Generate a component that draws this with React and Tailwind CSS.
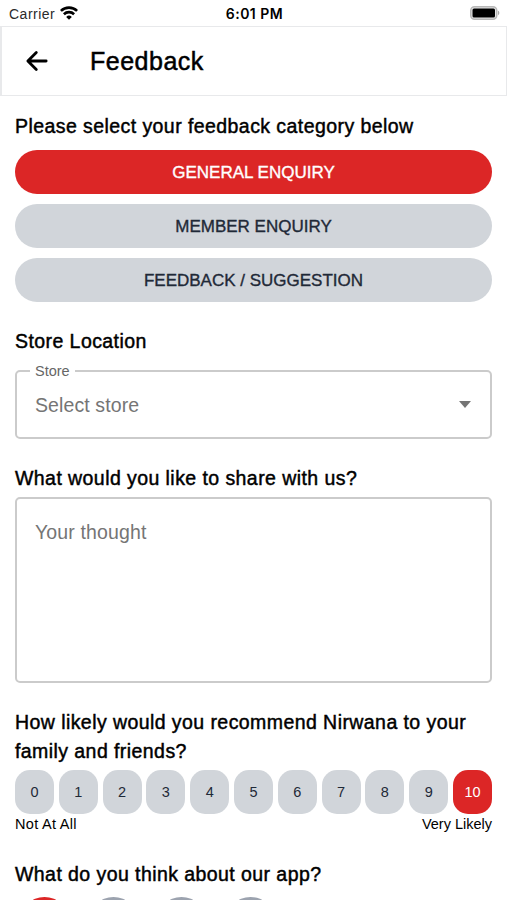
import React, { useState } from 'react';

const categories = ['GENERAL ENQUIRY', 'MEMBER ENQUIRY', 'FEEDBACK / SUGGESTION'];
const scores = [0, 1, 2, 3, 4, 5, 6, 7, 8, 9, 10];
const ratings = [1, 2, 3, 4];

const StatusBar = () => (
    <div className="h-[26px] pl-[9px] pr-[7px] grid grid-cols-3 items-center">
        <div className="flex items-center gap-[5px]">
            <span className="text-[14px] leading-[26px] tracking-[0.5px] text-[#2a2a2a]">Carrier</span>
            <svg className="-mt-px" width="18" height="14" viewBox="0 0 18 14" fill="none" stroke="#000" strokeWidth="2.6">
                <path d="M0.9 4.9a11.6 11.6 0 0 1 16.2 0" />
                <path d="M3.9 8.2a7.3 7.3 0 0 1 10.2 0" />
                <path d="M9 13.8 6.2 10.9a4 4 0 0 1 5.6 0z" fill="#000" stroke="none" />
            </svg>
        </div>
        <span className="text-center text-[14px] leading-[26px] tracking-[0.5px] font-semibold pt-px font-[Inter,sans-serif]">6:01 PM</span>
        <svg className="justify-self-end -mt-px" width="30" height="14" viewBox="0 0 30 14">
            <rect x="0.75" y="0.75" width="26" height="12.5" rx="3.8" fill="#e6e6e6" stroke="#b8b8b8" strokeWidth="1.5" />
            <rect x="2.5" y="2.5" width="22.5" height="9" rx="1.5" fill="#000" />
            <path d="M28 4.8v4.4c1.8-.6 1.8-3.8 0-4.4z" fill="#aaa" />
        </svg>
    </div>
);

const Question = ({ children }) => (
    <h2 className="text-[19.5px] leading-[29px] tracking-[0.43px] text-black [-webkit-text-stroke:0.45px_#000]">{children}</h2>
);

const App = () => {
    const [category, setCategory] = useState('GENERAL ENQUIRY');
    const [score, setScore] = useState(10);
    const [rating, setRating] = useState(1);

    return (
        <div className="h-[900px] overflow-hidden bg-white text-black font-['Liberation_Sans',Arial,sans-serif]">
            <StatusBar />

            <header className="h-[70px] flex items-center border border-l-2 border-[#e8e9eb] pl-[20px]">
                <button type="button" aria-label="Back">
                    <svg width="30" height="30" viewBox="0 0 512 512" fill="none" stroke="#000" strokeWidth="48" strokeLinecap="round" strokeLinejoin="round">
                        <path d="M244 400 100 256l144-144M120 256h292" />
                    </svg>
                </button>
                <h1 className="ml-[38px] pb-px text-[25px] leading-[30px] tracking-[0.5px] [-webkit-text-stroke:0.5px_#000]">Feedback</h1>
            </header>

            <main className="px-[15px] pt-[16px]">
                <Question>Please select your feedback category below</Question>
                <div className="mt-[9px] flex flex-col gap-[10px]">
                    {categories.map((c) => (
                        <button
                            key={c}
                            type="button"
                            onClick={() => setCategory(c)}
                            className={`h-[44px] rounded-full pt-px text-[17px] ${c === category ? 'bg-[#dc2626] text-white [-webkit-text-stroke:0.35px_#fff]' : 'bg-[#d1d5da] text-[#1f2937] [-webkit-text-stroke:0.35px_#1f2937]'}`}
                        >
                            {c}
                        </button>
                    ))}
                </div>

                <div className="mt-[25px]">
                    <Question>Store Location</Question>
                </div>
                {/* Outlined select, the legend cuts the top border */}
                <fieldset className="mt-[7px] h-[76px] rounded-[5px] border-2 border-[#cbcbcb] pl-[13px] pr-[19px]">
                    <legend className="px-[5px] text-[14.5px] leading-[16px] text-[#666]">Store</legend>
                    <div className="flex items-center justify-between pl-[5px] pt-[14px]">
                        <span className="text-[19.5px] leading-[24px] tracking-[0.1px] text-[#757575]">Select store</span>
                        <svg className="-mt-[2px]" width="12" height="7" viewBox="0 0 12 7" fill="#757575">
                            <path d="M0 0h12L6 7z" />
                        </svg>
                    </div>
                </fieldset>

                <div className="mt-[25px]">
                    <Question>What would you like to share with us?</Question>
                </div>
                <textarea
                    placeholder="Your thought"
                    className="mt-[4px] block h-[186px] w-full resize-none rounded-[5px] border-2 border-[#cbcbcb] px-[18px] py-[20px] text-[19.5px] leading-[26px] tracking-[0.13px] placeholder:text-[#757575] focus:outline-none"
                />

                <div className="mt-[25px]">
                    <Question>How likely would you recommend Nirwana to your family and friends?</Question>
                </div>
                <div className="mt-[4px] flex justify-between">
                    {scores.map((n) => (
                        <button
                            key={n}
                            type="button"
                            onClick={() => setScore(n)}
                            className={`h-[44px] w-[39px] rounded-[15px] pt-[2px] text-[14.5px] ${n === score ? 'bg-[#dc2626] text-white' : 'bg-[#d1d5da] text-[#1f2937]'}`}
                        >
                            {n}
                        </button>
                    ))}
                </div>
                <div className="flex justify-between text-[14.5px] leading-[20px]">
                    <span className="tracking-[0.3px]">Not At All</span>
                    <span>Very Likely</span>
                </div>

                <div className="mt-[26px]">
                    <Question>What do you think about our app?</Question>
                </div>
                <div className="mt-[8px] flex gap-[19.5px] pl-[5px]">
                    {ratings.map((r) => (
                        <button
                            key={r}
                            type="button"
                            aria-label={`Rate ${r}`}
                            onClick={() => setRating(r)}
                            className={`size-[49px] rounded-full ${r === rating ? 'bg-[#dc2626]' : 'bg-[#9ca3af]'}`}
                        />
                    ))}
                </div>
            </main>
        </div>
    );
};

export default App;
